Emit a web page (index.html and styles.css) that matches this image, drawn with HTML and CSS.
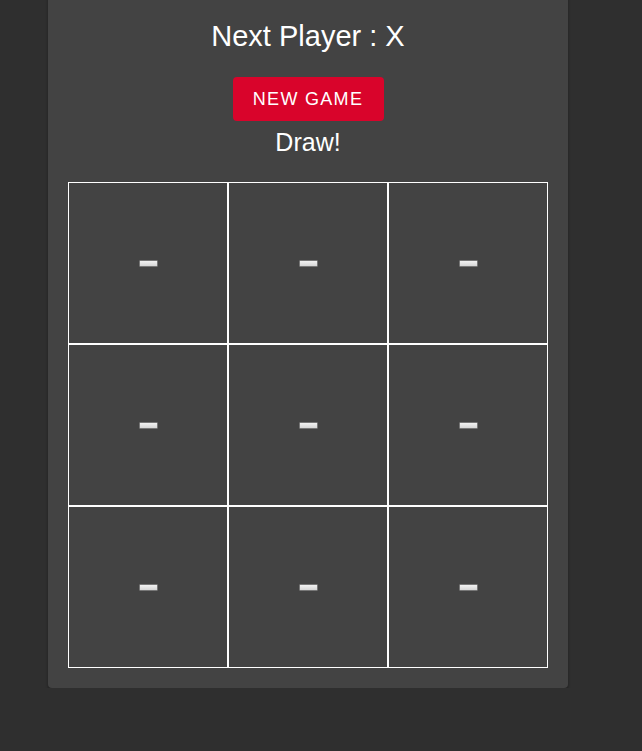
FILE: index.html
```html
<!DOCTYPE html>
<html lang="en">

<head>
    <meta charset="UTF-8">
    <meta name="viewport" content="width=device-width, initial-scale=1.0">
    <title>Tic Tac Toe</title>
    <link rel="stylesheet" href="styles.css">
</head>

<body>
    <div class="game">
        <h1 class="status">Next Player : <span class="player">X</span></h1>
        <button class="new-game">NEW GAME</button>
        <p class="result">Draw!</p>
        <div class="board">
            <div class="cell"><span class="mark"></span></div>
            <div class="cell"><span class="mark"></span></div>
            <div class="cell"><span class="mark"></span></div>
            <div class="cell"><span class="mark"></span></div>
            <div class="cell"><span class="mark"></span></div>
            <div class="cell"><span class="mark"></span></div>
            <div class="cell"><span class="mark"></span></div>
            <div class="cell"><span class="mark"></span></div>
            <div class="cell"><span class="mark"></span></div>
        </div>
    </div>
</body>

</html>
```

FILE: styles.css
```css
body {
    margin: 0;
    background-color: #2f2f2f;
    font-family: "Liberation Sans", Arial, sans-serif;
    color: #fff;
    overflow: hidden;
}

.game {
    width: 520px;
    margin: -10px 0 0 48px;
    padding: 30px 20px 20px;
    box-sizing: border-box;
    background-color: #434343;
    border-radius: 4px;
    box-shadow: 0 2px 3px rgba(0, 0, 0, 0.35);
    display: flex;
    flex-direction: column;
    align-items: center;
}

.status {
    margin: 0;
    font-size: 29px;
    font-weight: normal;
}

.new-game {
    margin-top: 24px;
    width: 151px;
    height: 44px;
    background-color: #d9042b;
    color: #fff;
    border: none;
    border-radius: 4px;
    font-family: "Liberation Sans", Arial, sans-serif;
    font-size: 18px;
    letter-spacing: 1.3px;
    cursor: pointer;
}

.result {
    margin: 7px 0 0;
    font-size: 25px;
}

.board {
    margin-top: 25px;
    display: grid;
    grid-template-columns: repeat(3, 160px);
    grid-template-rows: repeat(3, 162px);
}

.cell {
    border: 1px solid #fff;
    display: flex;
    align-items: center;
    justify-content: center;
}

.mark {
    width: 19px;
    height: 7px;
    box-sizing: border-box;
    border: 1px solid #777;
    border-radius: 1px;
    background: linear-gradient(#f2f2f2, #d6d6d6);
    margin: 1px 0 0 1px;
}
```
